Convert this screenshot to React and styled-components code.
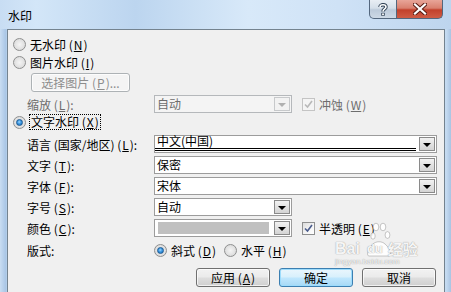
import React from 'react';
import styled, { createGlobalStyle, css } from 'styled-components';

const GlobalStyle = createGlobalStyle`
  html, body {
    margin: 0;
    padding: 0;
    background: #bcd5ee;
  }
  body {
    font-family: "Noto Sans CJK SC", "Liberation Sans", sans-serif;
    font-size: 12px;
    color: #000;
  }
`;

const Window = styled.div`
  position: relative;
  width: 451px;
  height: 292px;
  overflow: hidden;
  display: flex;
  flex-direction: column;
  background: linear-gradient(90deg, #c9ddf2 0, #a8c5e5 6px, #bcd5ee 7px, #bcd5ee 440px, #c6dcf2 446px, #a9c4e2 451px);
`;

const TitleBar = styled.div`
  height: 29px;
  flex: none;
  display: flex;
  align-items: flex-start;
  padding: 0 8px;
  background: linear-gradient(90deg, #c8ddf3 0%, #d3e6f8 8%, #bcd5ef 30%, #d8e9f9 55%, #cfe2f6 75%, #bdd5ee 100%);
`;

const Title = styled.div`
  margin-top: 8px;
  font-size: 12px;
  line-height: 15px;
  color: #000;
`;

const Caption = styled.div`
  margin-left: auto;
  display: flex;
  height: 19px;
`;

const CaptionButton = styled.div`
  height: 19px;
  box-sizing: border-box;
  display: flex;
  align-items: center;
  justify-content: center;
  border: 1px solid #53677e;
  border-top: none;
  ${p => p.$close ? css`
    width: 46px;
    border-radius: 0 0 5px 0;
    border-left: none;
    background: linear-gradient(180deg, #e8a598 0%, #d9806f 45%, #c2412c 55%, #cf5c45 100%);
  ` : css`
    width: 28px;
    border-radius: 0 0 0 5px;
    background: linear-gradient(180deg, #e9eef4 0%, #d5dfe9 45%, #bccada 55%, #cdd9e6 100%);
  `}
`;

const Frame = styled.div`
  flex: 1;
  display: flex;
  padding: 0 6px 0 7px;
`;

const Client = styled.div`
  position: relative;
  flex: 1;
  display: flex;
  flex-direction: column;
  background: #f0f0f0;
  border: 1px solid #74838f;
  border-bottom: none;
  padding-top: 5px;
`;

const OptionRow = styled.div`
  height: 18px;
  flex: none;
  display: flex;
  align-items: center;
  gap: 4px;
  padding-left: 5px;
  margin-top: ${p => p.$mt || 0}px;
`;

const IndentRow = styled.div`
  height: 18px;
  flex: none;
  display: flex;
  padding-left: 23px;
  margin-top: ${p => p.$mt || 0}px;
`;

const FieldRow = styled.div`
  height: 18px;
  flex: none;
  display: flex;
  align-items: center;
  padding-left: 19px;
  margin-top: ${p => p.$mt || 0}px;
`;

const Label = styled.div`
  width: 127px;
  flex: none;
  white-space: nowrap;
  color: ${p => p.$disabled ? '#6d6d6d' : '#000'};
`;

const Key = styled.span`
  text-decoration: underline;
  margin: 0 1px;
`;

const Focus = styled.span`
  outline: 1px dotted #000;
  outline-offset: 0;
  padding: 0 1px;
  line-height: 14px;
`;

const RadioCircle = styled.span`
  width: 13px;
  height: 13px;
  flex: none;
  box-sizing: border-box;
  border-radius: 50%;
  border: 1px solid #8e8f8f;
  background: radial-gradient(circle at 50% 50%, #f4f4f4 0, #e6e6e6 45%, #d2d2d2 100%);
  display: flex;
  align-items: center;
  justify-content: center;
  &::after {
    content: '';
    display: ${p => p.$checked ? 'block' : 'none'};
    width: 7px;
    height: 7px;
    border-radius: 50%;
    box-sizing: border-box;
    border: 1px solid #1d5a92;
    background: radial-gradient(circle at 45% 40%, #9fd6ff 0, #3b97e0 45%, #1a6bb6 100%);
  }
`;

const Text = styled.span`
  white-space: nowrap;
  color: ${p => p.$disabled ? '#6d6d6d' : '#000'};
`;

const RadioItem = styled.div`
  display: flex;
  align-items: center;
  gap: 4px;
  width: ${p => p.$w ? `${p.$w}px` : 'auto'};
`;

const CheckBox = styled.span`
  width: 13px;
  height: 13px;
  flex: none;
  box-sizing: border-box;
  border: 1px solid ${p => p.$disabled ? '#c4c4c4' : '#8e8f8f'};
  background: ${p => p.$disabled ? '#f4f4f4' : 'linear-gradient(135deg, #dcdcdc 0, #f6f6f6 60%, #ffffff 100%)'};
  display: flex;
  align-items: center;
  justify-content: center;
`;

const CheckItem = styled.div`
  display: flex;
  align-items: center;
  gap: 4px;
  margin-left: 10px;
`;

const Combo = styled.div`
  width: ${p => p.$w}px;
  height: 18px;
  flex: none;
  box-sizing: border-box;
  display: flex;
  align-items: stretch;
  border: 1px solid ${p => p.$disabled ? '#b5b8bb' : '#9c9c9c'};
  background: ${p => p.$disabled ? '#f4f4f4' : '#fff'};
`;

const ComboText = styled.div`
  flex: 1;
  display: flex;
  align-items: center;
  padding-left: 2px;
  margin-right: 2px;
  line-height: 14px;
  white-space: nowrap;
  color: ${p => p.$disabled ? '#6d6d6d' : '#000'};
  ${p => p.$double && css`
    border-bottom: 3px double #000;
    margin-bottom: 1px;
    align-items: flex-end;
  `}
`;

const Swatch = styled.div`
  flex: 1;
  margin: 2px 4px 2px 3px;
  background: #c0c0c0;
`;

const DropButton = styled.div`
  width: 16px;
  flex: none;
  margin: 1px;
  box-sizing: border-box;
  border: 1px solid ${p => p.$disabled ? '#c7c9cb' : '#8a8a8a'};
  background: ${p => p.$disabled ? '#f2f2f2' : 'linear-gradient(180deg, #f2f2f2 0%, #e1e1e1 55%, #d4d4d4 100%)'};
  display: flex;
  align-items: center;
  justify-content: center;
  &::after {
    content: '';
    width: 0;
    height: 0;
    border-left: 4px solid transparent;
    border-right: 4px solid transparent;
    border-top: 4px solid ${p => p.$disabled ? '#b0b0b0' : '#000'};
    margin-top: 1px;
  }
`;

const PushButton = styled.button`
  position: relative;
  z-index: 1;
  width: ${p => p.$w || 74}px;
  height: 19px;
  box-sizing: border-box;
  padding: 0;
  font-family: inherit;
  font-size: 12px;
  line-height: 15px;
  border-radius: 3px;
  color: ${p => p.$disabled ? '#8d8d8d' : '#000'};
  border: 1px solid ${p => p.$default ? '#3c7fb1' : p.$disabled ? '#adb2b5' : '#707070'};
  background: ${p => p.$disabled
    ? '#f4f4f4'
    : p.$default
      ? 'linear-gradient(180deg, #eaf6fd 0%, #d9f0fc 45%, #bee6fd 55%, #a7d9f5 100%)'
      : 'linear-gradient(180deg, #f2f2f2 0%, #ebebeb 45%, #dddddd 55%, #cfcfcf 100%)'};
  box-shadow: ${p => p.$default ? 'inset 0 0 0 1px #9ddcfc' : 'inset 0 0 0 1px rgba(255,255,255,0.7)'};
`;

const ButtonBar = styled.div`
  display: flex;
  justify-content: flex-end;
  gap: 9px;
  padding-right: 8px;
  margin-top: 9px;
`;

const Watermark = styled.div`
  position: absolute;
  left: 327px;
  top: 189px;
  pointer-events: none;
  display: flex;
  flex-direction: column;
  align-items: flex-start;
  color: rgba(255, 255, 255, 0.92);
  text-shadow: 0 0 1px rgba(110, 110, 110, 0.55), 0 0 1px rgba(110, 110, 110, 0.4);
`;

const MarkLine = styled.div`
  position: relative;
  display: flex;
  align-items: flex-end;
  height: ${p => p.$h}px;
  font-family: "Liberation Sans", "Noto Sans CJK SC", sans-serif;
  font-weight: ${p => p.$light ? 'normal' : 'bold'};
  font-size: ${p => p.$size}px;
  line-height: ${p => p.$h}px;
  margin-top: ${p => p.$mt || 0}px;
  & > span {
    line-height: ${p => p.$h}px;
  }
`;

const Radio = ({ checked, children, w }) => (
  <RadioItem $w={w}>
    <RadioCircle $checked={checked} />
    {children}
  </RadioItem>
);

const Check = ({ checked, disabled, children }) => (
  <CheckItem>
    <CheckBox $disabled={disabled}>
      {checked && (
        <svg width="9" height="9" viewBox="0 0 9 9">
          <path d="M1 4.5 L3.5 7 L8 1" fill="none" stroke={disabled ? '#b8b8b8' : '#4a5c8c'} strokeWidth="1.6" />
        </svg>
      )}
    </CheckBox>
    <Text $disabled={disabled}>{children}</Text>
  </CheckItem>
);

const Dropdown = ({ w, disabled, double, swatch, children }) => (
  <Combo $w={w} $disabled={disabled}>
    {swatch ? <Swatch /> : <ComboText $disabled={disabled} $double={double}>{children}</ComboText>}
    <DropButton $disabled={disabled} />
  </Combo>
);

const Paw = () => (
  <svg width="26" height="40" viewBox="0 0 26 40" style={{ position: 'absolute', left: 31, top: 0 }}>
    <g fill="rgba(255,255,255,0.9)" stroke="rgba(120,120,120,0.4)" strokeWidth="1">
      <ellipse cx="7" cy="17" rx="2.2" ry="3.2" />
      <ellipse cx="10" cy="8" rx="2.8" ry="3.8" />
      <ellipse cx="17" cy="8" rx="2.8" ry="3.8" />
      <ellipse cx="21.5" cy="16" rx="2.4" ry="3.4" />
      <path d="M3 37 C0 37 2 29 7 25 C10 22 16 22 19 25 C24 29 26 37 23 37 Z" />
    </g>
  </svg>
);

export default function App() {
  return (
    <>
      <GlobalStyle />
      <Window>
        <TitleBar>
          <Title>水印</Title>
          <Caption>
            <CaptionButton>
              <svg width="10" height="13" viewBox="0 0 10 13">
                <path d="M2 4 C2 1 8 1 8 4 C8 6 5 6 5 8.5" fill="none" stroke="#2b3c50" strokeWidth="3.4" />
                <path d="M2 4 C2 1 8 1 8 4 C8 6 5 6 5 8.5" fill="none" stroke="#fff" strokeWidth="1.6" />
                <rect x="3.3" y="9.8" width="3.4" height="3" fill="#2b3c50" />
                <rect x="4.1" y="10.4" width="1.8" height="1.8" fill="#fff" />
              </svg>
            </CaptionButton>
            <CaptionButton $close>
              <svg width="14" height="12" viewBox="0 0 14 12">
                <path d="M2 1.5 L12 10.5 M12 1.5 L2 10.5" stroke="#5a1d14" strokeWidth="4.2" strokeLinecap="square" />
                <path d="M2 1.5 L12 10.5 M12 1.5 L2 10.5" stroke="#fff" strokeWidth="2.2" strokeLinecap="square" />
              </svg>
            </CaptionButton>
          </Caption>
        </TitleBar>
        <Frame>
          <Client>
            <OptionRow>
              <Radio><Text>无水印 (<Key>N</Key>)</Text></Radio>
            </OptionRow>
            <OptionRow>
              <Radio><Text>图片水印 (<Key>I</Key>)</Text></Radio>
            </OptionRow>
            <IndentRow $mt={2}>
              <PushButton $w={99} $disabled>选择图片 (<Key>P</Key>)...</PushButton>
            </IndentRow>
            <FieldRow $mt={4}>
              <Label $disabled>缩放 (<Key>L</Key>):</Label>
              <Dropdown w={138} disabled>自动</Dropdown>
              <Check checked disabled>冲蚀 (<Key>W</Key>)</Check>
            </FieldRow>
            <OptionRow>
              <Radio checked><Focus>文字水印 (<Key>X</Key>)</Focus></Radio>
            </OptionRow>
            <FieldRow $mt={4}>
              <Label>语言 (国家/地区) (<Key>L</Key>):</Label>
              <Dropdown w={283} double>中文(中国)</Dropdown>
            </FieldRow>
            <FieldRow $mt={3}>
              <Label>文字 (<Key>T</Key>):</Label>
              <Dropdown w={283}>保密</Dropdown>
            </FieldRow>
            <FieldRow $mt={3}>
              <Label>字体 (<Key>F</Key>):</Label>
              <Dropdown w={283}>宋体</Dropdown>
            </FieldRow>
            <FieldRow $mt={3}>
              <Label>字号 (<Key>S</Key>):</Label>
              <Dropdown w={138}>自动</Dropdown>
            </FieldRow>
            <FieldRow $mt={3}>
              <Label>颜色 (<Key>C</Key>):</Label>
              <Dropdown w={138} swatch />
              <Check checked>半透明 (<Key>E</Key>)</Check>
            </FieldRow>
            <FieldRow $mt={4}>
              <Label>版式:</Label>
              <Radio checked w={70}><Text>斜式 (<Key>D</Key>)</Text></Radio>
              <Radio><Text>水平 (<Key>H</Key>)</Text></Radio>
            </FieldRow>
            <ButtonBar>
              <PushButton>应用 (<Key>A</Key>)</PushButton>
              <PushButton $default>确定</PushButton>
              <PushButton>取消</PushButton>
            </ButtonBar>
            <Watermark>
              <Paw />
              <MarkLine $size={16} $h={15} $mt={22}>
                Bai<span style={{ fontSize: 13, marginLeft: 7 }}>du</span>
                <span style={{ fontFamily: '"Noto Sans CJK SC", sans-serif', fontSize: 15, marginLeft: 5 }}>经验</span>
              </MarkLine>
              <MarkLine $size={8} $h={9} $light $mt={1}>jingyan.baidu.com</MarkLine>
            </Watermark>
          </Client>
        </Frame>
      </Window>
    </>
  );
}
